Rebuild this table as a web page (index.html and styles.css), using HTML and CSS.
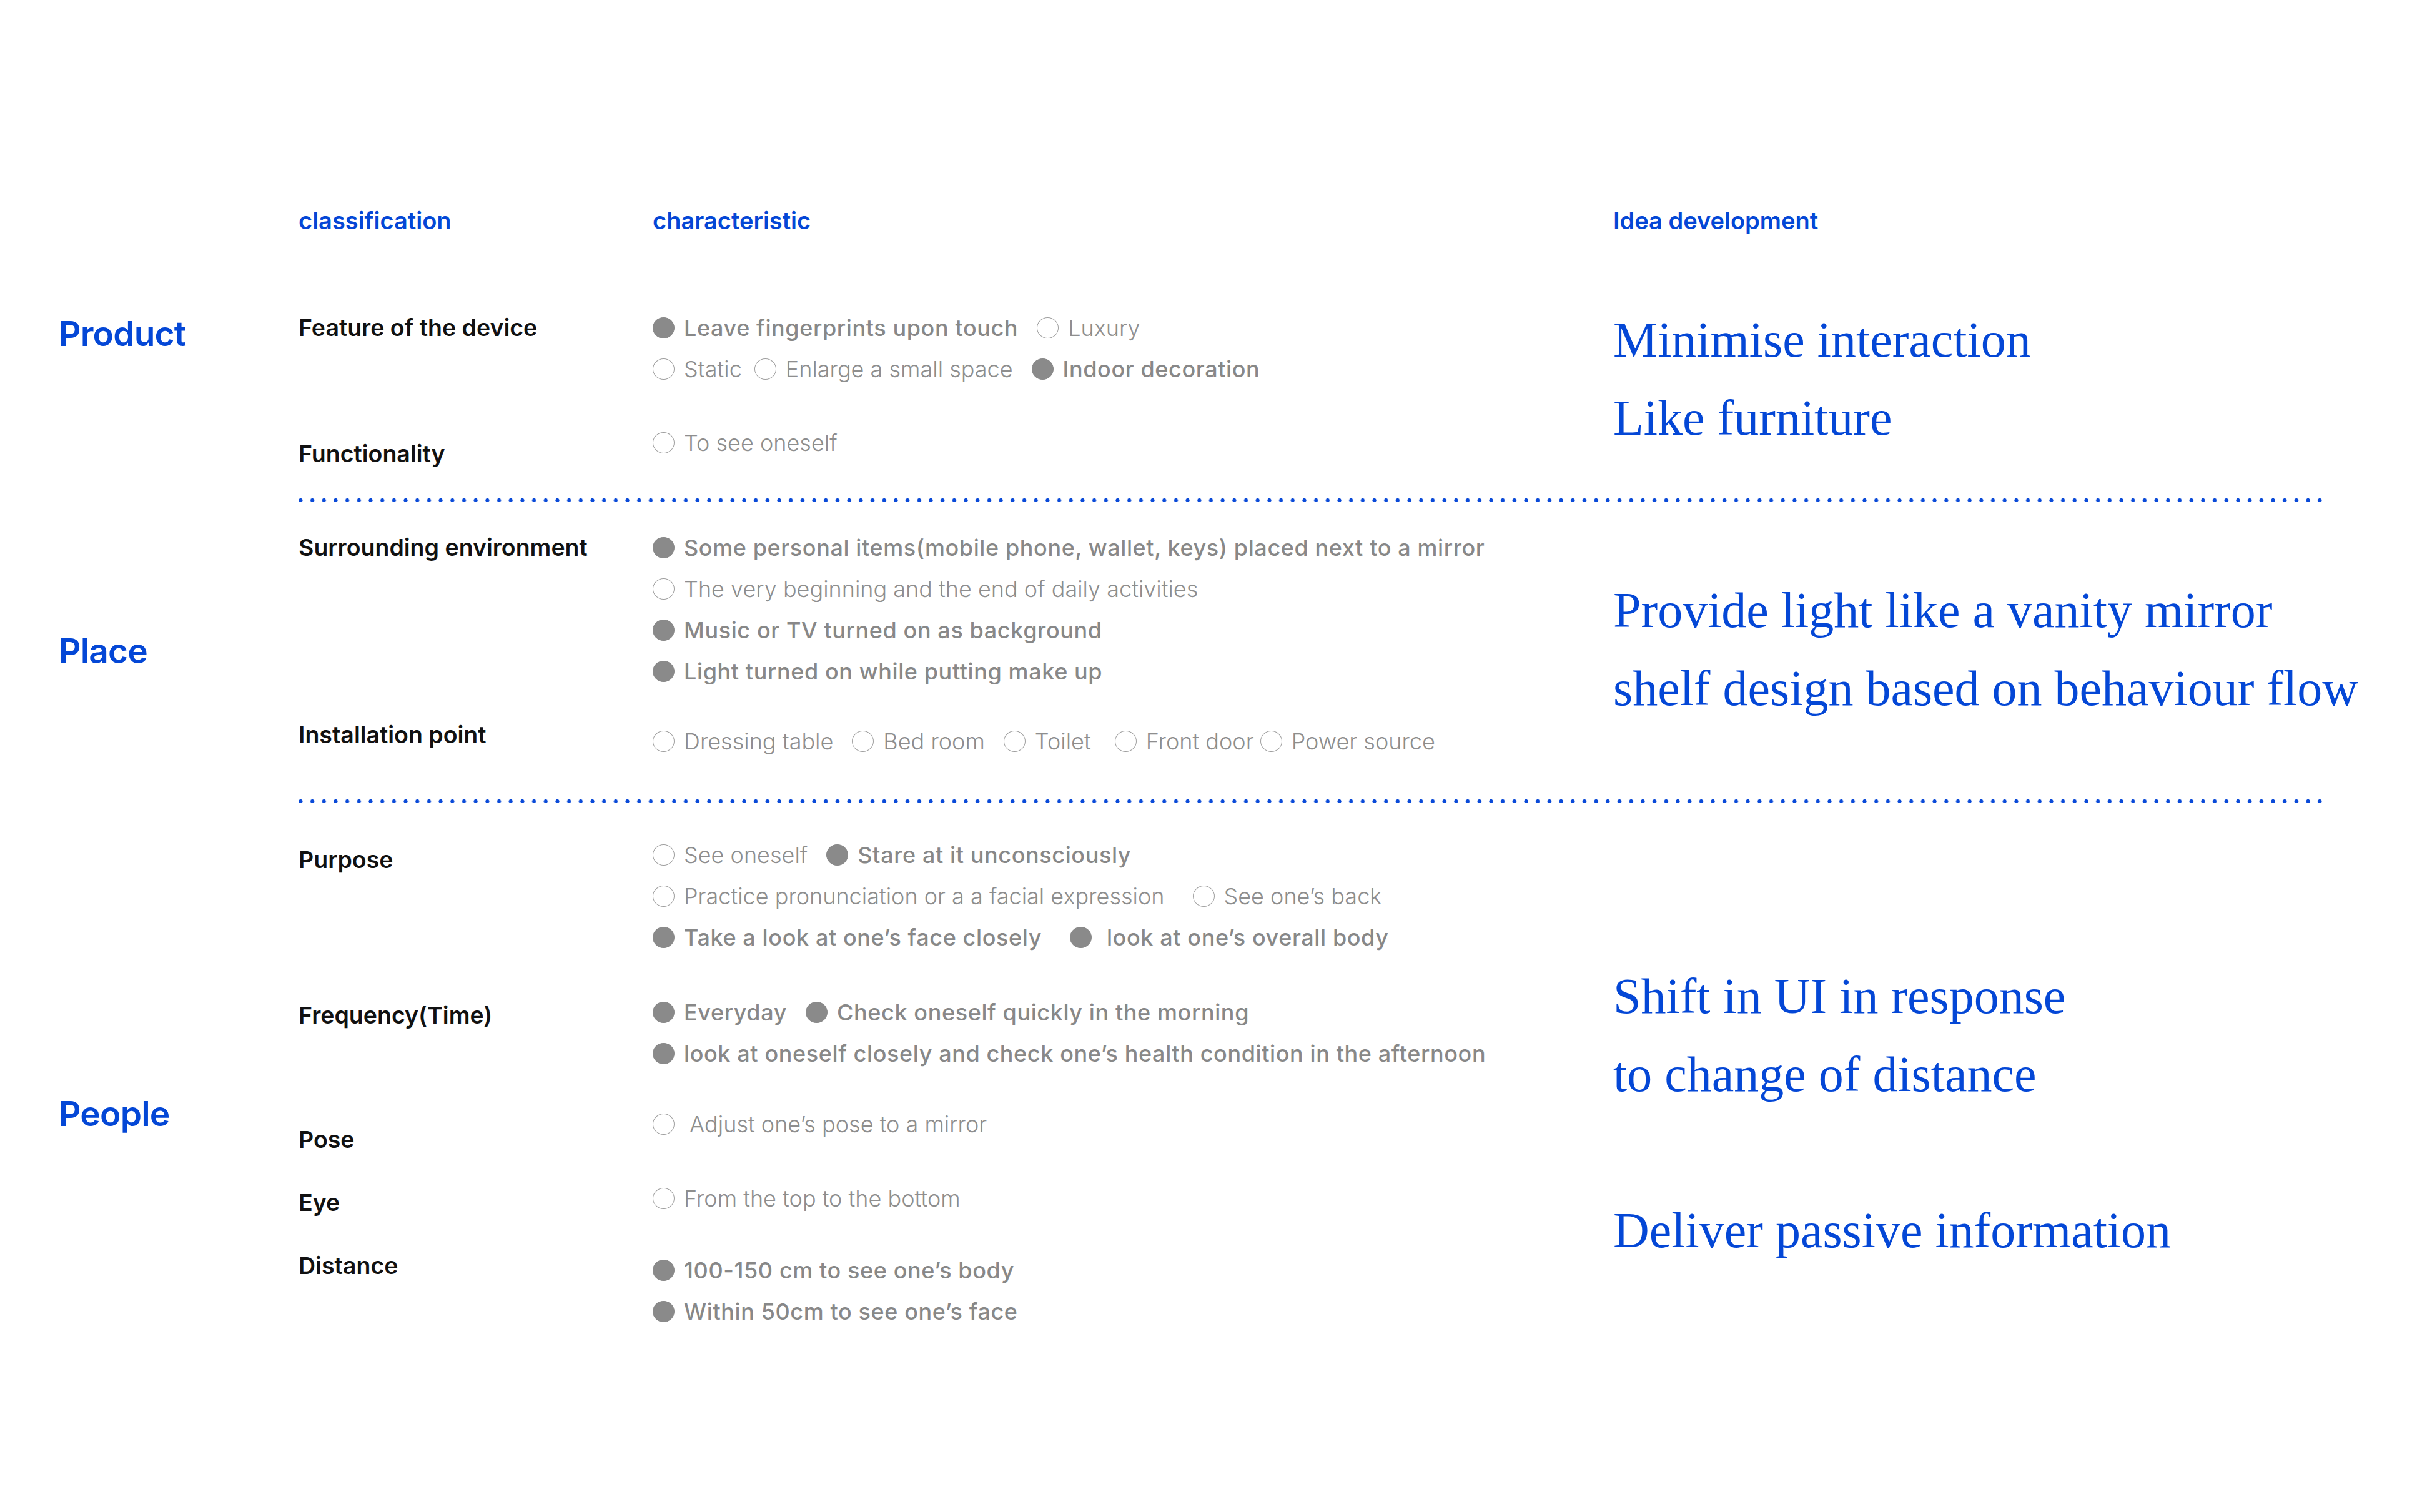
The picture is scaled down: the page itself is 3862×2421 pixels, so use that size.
FILE: index.html
```html
<!DOCTYPE html>
<html lang="en">
<head>
    <meta charset="UTF-8">
    <meta name="viewport" content="width=device-width, initial-scale=1.0">
    <title>Mirror research</title>
    <link rel="stylesheet" href="styles.css">
</head>
<body>
    <div class="board">
        <div class="heads">
            <span></span>
            <span class="head">classification</span>
            <span class="head">characteristic</span>
            <span class="head">Idea development</span>
        </div>

        <section class="group group-product">
            <h2 class="cat">Product</h2>
            <div class="specs">
                <div class="spec">
                    <h3 class="label">Feature of the device</h3>
                    <div class="opts">
                        <div class="line"><span class="opt on">Leave fingerprints upon touch</span><span class="opt">Luxury</span></div>
                        <div class="line"><span class="opt">Static</span><span class="opt near">Enlarge a small space</span><span class="opt on">Indoor decoration</span></div>
                    </div>
                </div>
                <div class="spec spec-function">
                    <h3 class="label">Functionality</h3>
                    <div class="opts">
                        <div class="line"><span class="opt">To see oneself</span></div>
                    </div>
                </div>
            </div>
            <div class="ideas ideas-product">
                <p>Minimise interaction</p>
                <p>Like furniture</p>
            </div>
        </section>

        <div class="divider"></div>

        <section class="group group-place">
            <h2 class="cat">Place</h2>
            <div class="specs">
                <div class="spec">
                    <h3 class="label">Surrounding environment</h3>
                    <div class="opts">
                        <div class="line"><span class="opt on">Some personal items(mobile phone, wallet, keys) placed next to a mirror</span></div>
                        <div class="line"><span class="opt">The very beginning and the end of daily activities</span></div>
                        <div class="line"><span class="opt on">Music or TV turned on as background</span></div>
                        <div class="line"><span class="opt on">Light turned on while putting make up</span></div>
                    </div>
                </div>
                <div class="spec spec-install">
                    <h3 class="label">Installation point</h3>
                    <div class="opts">
                        <div class="line"><span class="opt">Dressing table</span><span class="opt">Bed room</span><span class="opt">Toilet</span><span class="opt mid">Front door</span><span class="opt close">Power source</span></div>
                    </div>
                </div>
            </div>
            <div class="ideas ideas-place">
                <p>Provide light like a vanity mirror</p>
                <p>shelf design based on behaviour flow</p>
            </div>
        </section>

        <div class="divider divider-low"></div>

        <section class="group group-people">
            <h2 class="cat">People</h2>
            <div class="specs">
                <div class="spec spec-purpose">
                    <h3 class="label">Purpose</h3>
                    <div class="opts">
                        <div class="line"><span class="opt">See oneself</span><span class="opt on">Stare at it unconsciously</span></div>
                        <div class="line"><span class="opt">Practice pronunciation or a a facial expression</span><span class="opt far">See one’s back</span></div>
                        <div class="line"><span class="opt on">Take a look at one’s face closely</span><span class="opt on far spaced">look at one’s overall body</span></div>
                    </div>
                </div>
                <div class="spec spec-freq">
                    <h3 class="label">Frequency(Time)</h3>
                    <div class="opts">
                        <div class="line"><span class="opt on">Everyday</span><span class="opt on">Check oneself quickly in the morning</span></div>
                        <div class="line"><span class="opt on">look at oneself closely and check one’s health condition in the afternoon</span></div>
                    </div>
                </div>
                <div class="spec spec-pose">
                    <h3 class="label">Pose</h3>
                    <div class="opts">
                        <div class="line"><span class="opt spaced">Adjust one’s pose to a mirror</span></div>
                    </div>
                </div>
                <div class="spec spec-eye">
                    <h3 class="label">Eye</h3>
                    <div class="opts">
                        <div class="line"><span class="opt">From the top to the bottom</span></div>
                    </div>
                </div>
                <div class="spec spec-distance">
                    <h3 class="label">Distance</h3>
                    <div class="opts">
                        <div class="line"><span class="opt on">100-150 cm to see one’s body</span></div>
                        <div class="line"><span class="opt on">Within 50cm to see one’s face</span></div>
                    </div>
                </div>
            </div>
            <div class="ideas ideas-people">
                <p>Shift in UI in response</p>
                <p>to change of distance</p>
                <p class="apart">Deliver passive information</p>
            </div>
        </section>
    </div>
</body>
</html>
```

FILE: styles.css
```css
body {
    margin: 0;
    background-color: #fff;
    font-family: Inter, "Noto Sans", sans-serif;
}
.board {
    padding: 328px 0 200px 94px;
}
h2, h3, p {
    margin: 0;
}

/* column heads */
.heads {
    display: grid;
    grid-template-columns: 384px 567px 1538px 1fr;
    line-height: 50px;
}
.head {
    font-size: 38px;
    font-weight: 600;
    color: #0447d6;
}

/* groups */
.group {
    display: grid;
    grid-template-columns: 384px 2105px 1fr;
    align-items: start;
}
.cat {
    font-size: 55px;
    font-weight: 600;
    line-height: 66px;
    letter-spacing: -0.8px;
    color: #0447d6;
}
.spec {
    display: grid;
    grid-template-columns: 567px 1fr;
    align-items: start;
}
.label {
    font-size: 37.5px;
    font-weight: 600;
    line-height: 66px;
    color: #111;
}
.line {
    display: flex;
    align-items: center;
    height: 66px;
    white-space: nowrap;
}
.opt {
    display: inline-flex;
    align-items: center;
    font-size: 36px;
    font-weight: 300;
    color: #8e8e8e;
}
.opt::before {
    content: '';
    width: 35px;
    height: 34px;
    margin-right: 15px;
    border: 1.5px solid #a0a0a0;
    border-radius: 50%;
    box-sizing: border-box;
    flex-shrink: 0;
}
.opt.on {
    font-weight: 500;
    letter-spacing: 0.6px;
    color: #888;
}
.opt.on::before {
    background-color: #8a8a8a;
    border-color: #8a8a8a;
}
.opt + .opt {
    margin-left: 30px;
}
.opt + .opt.near {
    margin-left: 20px;
}
.opt + .opt.close {
    margin-left: 10px;
}
.opt + .opt.mid {
    margin-left: 38px;
}
.opt + .opt.far {
    margin-left: 45px;
}
.opt.spaced::before {
    margin-right: 24px;
}

.ideas {
    font-family: "Liberation Serif", "Times New Roman", serif;
    font-size: 80px;
    line-height: 125px;
    color: #0447d6;
    white-space: nowrap;
}
.ideas .apart {
    margin-top: 125px;
}

/* dotted rule */
.divider {
    height: 6px;
    width: 3244px;
    margin: 56px 0 0 384px;
    background-image: radial-gradient(circle, #0a4ad8 2.8px, transparent 3.4px);
    background-size: 18.7px 6px;
    background-repeat: repeat-x;
    background-position: -6px 0;
}
.divider-low {
    margin-top: 60px;
}

/* product */
.group-product {
    margin-top: 114px;
}
.group-product .cat {
    margin-top: 9px;
}
.ideas-product {
    margin-top: -10px;
}
.spec-function {
    margin-top: 52px;
}
.spec-function .label {
    padding-top: 18px;
    margin-bottom: -18px;
}

/* place */
.group-place {
    margin-top: 40px;
}
.group-place .cat {
    margin-top: 165px;
}
.ideas-place {
    margin-top: 71px;
}
.spec-install {
    margin-top: 46px;
}
.spec-install .label {
    margin-top: -10px;
}

/* people */
.group-people {
    margin-top: 50px;
}
.group-people .cat {
    margin-top: 414px;
}
.ideas-people {
    margin-top: 197px;
}
.spec-purpose .label {
    padding-top: 8px;
}
.spec-freq {
    margin-top: 54px;
}
.spec-freq .label {
    padding-top: 5px;
}
.spec-pose {
    margin-top: 47px;
}
.spec-pose .label {
    padding-top: 25px;
    margin-bottom: -25px;
}
.spec-eye {
    margin-top: 53px;
}
.spec-eye .label {
    padding-top: 7px;
    margin-bottom: -7px;
}
.spec-distance {
    margin-top: 49px;
}
.spec-distance .label {
    margin-top: -7px;
}
```
